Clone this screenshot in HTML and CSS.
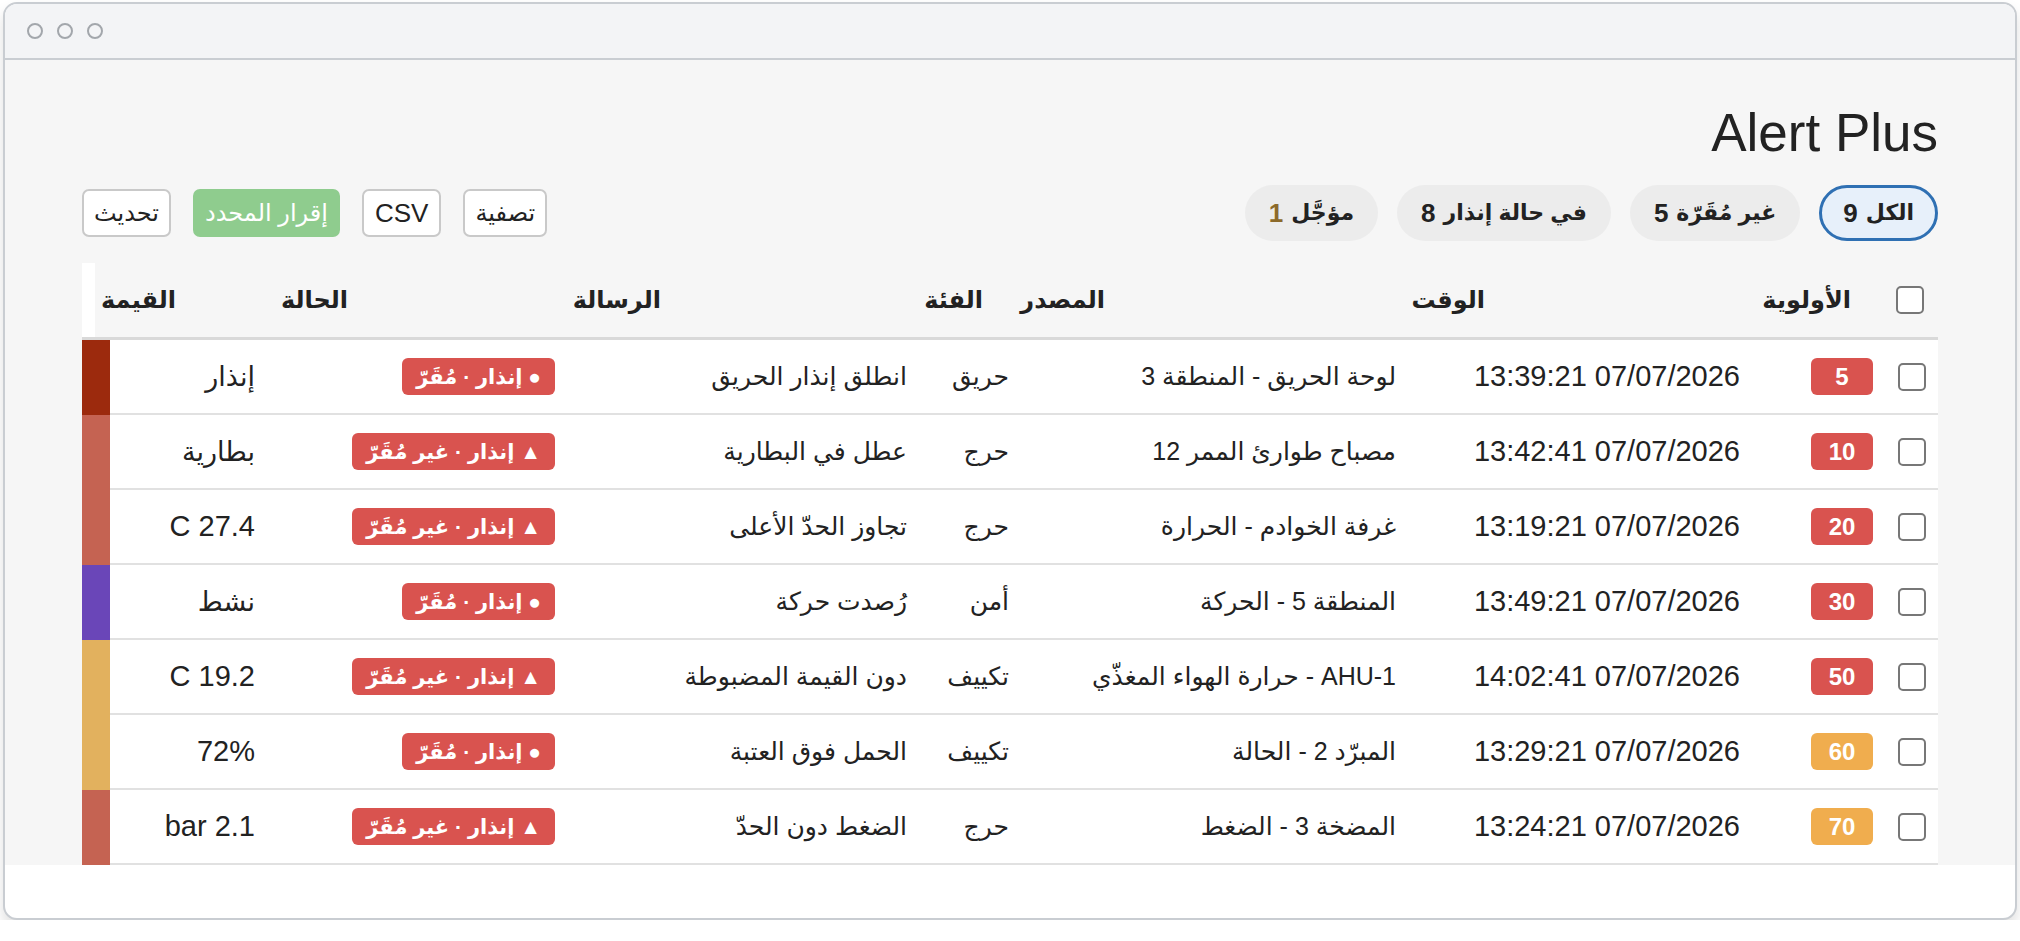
FILE: index.html
```html
<!DOCTYPE html>
<html lang="ar" dir="rtl">
<head>
<meta charset="utf-8">
<title>Alert Plus</title>
<link rel="stylesheet" href="styles.css">
</head>
<body>
<div class="window">
  <div class="titlebar">
    <span class="light"></span><span class="light"></span><span class="light"></span>
  </div>
  <div class="content">
    <h1 class="title">Alert Plus</h1>
    <div class="toolbar">
      <div class="pills">
        <button class="pill active">الكل <b>9</b></button>
        <button class="pill">غير مُقَرّة <b>5</b></button>
        <button class="pill">في حالة إنذار <b>8</b></button>
        <button class="pill">مؤجَّل <b class="gold">1</b></button>
      </div>
      <div class="actions">
        <button class="btn">تصفية</button>
        <button class="btn latin">CSV</button>
        <button class="btn green">إقرار المحدد</button>
        <button class="btn">تحديث</button>
      </div>
    </div>
    <div class="table">
      <div class="thead">
        <div class="th c-chk"><input type="checkbox" class="chk"></div>
        <div class="th">الأولوية</div>
        <div class="th">الوقت</div>
        <div class="th">المصدر</div>
        <div class="th">الفئة</div>
        <div class="th">الرسالة</div>
        <div class="th">الحالة</div>
        <div class="th">القيمة</div>
        <div class="th strip-h"></div>
      </div>

      <div class="tr">
        <div class="td c-chk"><input type="checkbox" class="chk"></div>
        <div class="td c-prio"><span class="prio red">5</span></div>
        <div class="td time">07/07/2026 13:39:21</div>
        <div class="td">لوحة الحريق - المنطقة 3</div>
        <div class="td">حريق</div>
        <div class="td">انطلق إنذار الحريق</div>
        <div class="td"><span class="status">● إنذار · مُقَرّ</span></div>
        <div class="td val">إنذار</div>
        <div class="td strip s-dark"></div>
      </div>

      <div class="tr">
        <div class="td c-chk"><input type="checkbox" class="chk"></div>
        <div class="td c-prio"><span class="prio red">10</span></div>
        <div class="td time">07/07/2026 13:42:41</div>
        <div class="td">مصباح طوارئ الممر 12</div>
        <div class="td">حرج</div>
        <div class="td">عطل في البطارية</div>
        <div class="td"><span class="status">▲ إنذار · غير مُقَرّ</span></div>
        <div class="td val">بطارية</div>
        <div class="td strip s-salmon"></div>
      </div>

      <div class="tr">
        <div class="td c-chk"><input type="checkbox" class="chk"></div>
        <div class="td c-prio"><span class="prio red">20</span></div>
        <div class="td time">07/07/2026 13:19:21</div>
        <div class="td">غرفة الخوادم - الحرارة</div>
        <div class="td">حرج</div>
        <div class="td">تجاوز الحدّ الأعلى</div>
        <div class="td"><span class="status">▲ إنذار · غير مُقَرّ</span></div>
        <div class="td val num">27.4 C</div>
        <div class="td strip s-salmon"></div>
      </div>

      <div class="tr">
        <div class="td c-chk"><input type="checkbox" class="chk"></div>
        <div class="td c-prio"><span class="prio red">30</span></div>
        <div class="td time">07/07/2026 13:49:21</div>
        <div class="td">المنطقة 5 - الحركة</div>
        <div class="td">أمن</div>
        <div class="td">رُصدت حركة</div>
        <div class="td"><span class="status">● إنذار · مُقَرّ</span></div>
        <div class="td val">نشط</div>
        <div class="td strip s-purple"></div>
      </div>

      <div class="tr">
        <div class="td c-chk"><input type="checkbox" class="chk"></div>
        <div class="td c-prio"><span class="prio red">50</span></div>
        <div class="td time">07/07/2026 14:02:41</div>
        <div class="td">AHU-1 - حرارة الهواء المغذّي</div>
        <div class="td">تكييف</div>
        <div class="td">دون القيمة المضبوطة</div>
        <div class="td"><span class="status">▲ إنذار · غير مُقَرّ</span></div>
        <div class="td val num">19.2 C</div>
        <div class="td strip s-amber"></div>
      </div>

      <div class="tr">
        <div class="td c-chk"><input type="checkbox" class="chk"></div>
        <div class="td c-prio"><span class="prio orange">60</span></div>
        <div class="td time">07/07/2026 13:29:21</div>
        <div class="td">المبرّد 2 - الحالة</div>
        <div class="td">تكييف</div>
        <div class="td">الحمل فوق العتبة</div>
        <div class="td"><span class="status">● إنذار · مُقَرّ</span></div>
        <div class="td val num">72%</div>
        <div class="td strip s-amber"></div>
      </div>

      <div class="tr">
        <div class="td c-chk"><input type="checkbox" class="chk"></div>
        <div class="td c-prio"><span class="prio orange">70</span></div>
        <div class="td time">07/07/2026 13:24:21</div>
        <div class="td">المضخة 3 - الضغط</div>
        <div class="td">حرج</div>
        <div class="td">الضغط دون الحدّ</div>
        <div class="td"><span class="status">▲ إنذار · غير مُقَرّ</span></div>
        <div class="td val num">2.1 bar</div>
        <div class="td strip s-salmon"></div>
      </div>
    </div>
  </div>
</div>
</body>
</html>
```

FILE: styles.css
```css
* { box-sizing: border-box; }

html, body {
  margin: 0;
  padding: 0;
  background: #ffffff;
}

body {
  font-family: "Liberation Sans", "DejaVu Sans", sans-serif;
  color: #222222;
  padding: 2px 3px 0 3px;
}

.window {
  height: 918px;
  border: 2px solid #c9cdd2;
  border-radius: 14px;
  background: #ffffff;
  overflow: hidden;
  box-shadow: 0 8px 14px rgba(0, 0, 0, 0.13);
}

.titlebar {
  direction: ltr;
  height: 56px;
  background: #f3f4f6;
  border-bottom: 2px solid #c9cdd2;
  display: flex;
  align-items: center;
  gap: 14px;
  padding-left: 22px;
}

.light {
  width: 16px;
  height: 16px;
  border-radius: 50%;
  border: 2px solid #a3a7ac;
}

.content {
  background: #f6f6f6;
  padding: 41px 77px 0 77px;
}

.title {
  margin: 0;
  font-family: "Liberation Sans", sans-serif;
  font-weight: 400;
  font-size: 53px;
  line-height: 64px;
  color: #222222;
  text-align: right;
}

.toolbar {
  margin-top: 20px;
  display: flex;
  align-items: center;
  justify-content: space-between;
  height: 56px;
}

.pills {
  display: flex;
  gap: 19px;
}

.pill {
  font-family: "Liberation Sans", "DejaVu Sans", sans-serif;
  height: 56px;
  padding: 0 21px;
  border-radius: 28px;
  border: 3px solid transparent;
  background: #ececec;
  color: #222222;
  font-size: 22px;
  font-weight: 600;
  display: flex;
  align-items: center;
  gap: 8px;
}

.pill b {
  font-weight: 700;
  font-size: 26px;
}

.pill b.gold { color: #8c6a2a; }

.pill.active {
  background: #e7f0fa;
  border-color: #2f70b3;
}

.actions {
  display: flex;
  gap: 22px;
}

.btn {
  font-family: "Liberation Sans", "DejaVu Sans", sans-serif;
  height: 48px;
  padding: 0 10px;
  border: 2px solid #c9c9c9;
  border-radius: 7px;
  background: #ffffff;
  color: #222222;
  font-size: 24px;
}

.btn.latin { font-size: 26px; padding: 0 11px; }

.btn.green {
  background: #8fcc8e;
  border-color: #8fcc8e;
  color: #ffffff;
}

.table {
  margin-top: 22px;
}

.thead {
  display: grid;
  grid-template-columns: 77px 366px 380px 122px 322px 313px 172px 91px 13px;
  height: 77px;
  border-bottom: 3px solid #d9d9d9;
}

.th {
  display: flex;
  align-items: center;
  padding-inline-start: 10px;
  font-weight: 700;
  font-size: 24px;
  color: #222222;
  white-space: nowrap;
}

.thead .c-chk { padding-inline-start: 14px; }

.strip-h { background: #ffffff; }

.tr {
  display: grid;
  grid-template-columns: 53px 135px 344px 387px 102px 352px 300px 155px 28px;
  height: 75px;
  background: #ffffff;
  border-bottom: 2px solid #e1e1e1;
}

.td {
  display: flex;
  align-items: center;
  padding-inline-start: 10px;
  font-size: 25px;
  color: #222222;
  white-space: nowrap;
}

.td.time { font-size: 29px; }

.td.c-chk, .td.c-prio { padding-inline-start: 12px; }

.td.val { font-size: 27px; }
.td.val.num { font-size: 29px; }

.tr .strip {
  padding: 0;
  margin-bottom: -2px;
}

.s-dark { background: #9c2a0d; }
.s-salmon { background: #c56352; }
.s-purple { background: #6a46b8; }
.s-amber { background: #e2b15e; }

.chk {
  appearance: none;
  -webkit-appearance: none;
  margin: 0;
  width: 28px;
  height: 28px;
  border: 2px solid #777777;
  border-radius: 5px;
  background: #ffffff;
}

.prio {
  width: 62px;
  height: 37px;
  border-radius: 6px;
  color: #ffffff;
  font-weight: 700;
  font-size: 24px;
  display: flex;
  align-items: center;
  justify-content: center;
}

.prio.red { background: #d9534f; }
.prio.orange { background: #f0ad4e; }

.status {
  height: 37px;
  padding: 0 14px;
  border-radius: 6px;
  background: #d9534f;
  color: #ffffff;
  font-weight: 700;
  font-size: 21px;
  display: flex;
  align-items: center;
}
```
